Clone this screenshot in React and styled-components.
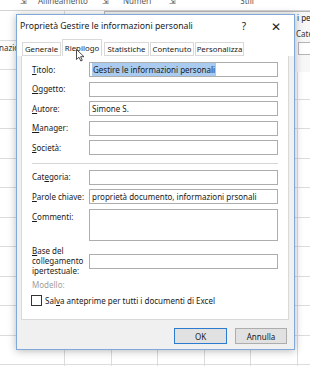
import {createGlobalStyle, styled} from 'styled-components'

const GlobalStyle = createGlobalStyle`
  html, body {
    margin: 0;
    padding: 0;
  }
  body {
    width: 310px;
    height: 366px;
    overflow: hidden;
    background: #fff;
    font-family: "Noto Sans", "Open Sans", sans-serif;
    color: #1a1a1a;
  }
`

const Sheet = styled.div`
  position: relative;
  width: 310px;
  height: 366px;
  overflow: hidden;
  background-color: #fff;
  background-image:
    repeating-linear-gradient(to bottom, transparent 0 28.5px, #dcdcdc 28.5px 29.5px),
    repeating-linear-gradient(to right, transparent 0 45.5px, #dcdcdc 45.5px 46.5px);
  background-position: 0 11px, 19px 0;
`

const Ribbon = styled.div`
  height: 10px;
  display: flex;
  align-items: flex-start;
  border-bottom: 1px solid #d4d4d4;
  background: #fff;
  font-size: 8px;
  line-height: 10px;
  color: #555;
  overflow: hidden;
`

const RibbonItem = styled.span`
  margin-left: ${p => p.$gap}px;
  margin-top: -4px;
  white-space: nowrap;
`

const BackWindow = styled.div`
  position: absolute;
  left: 104px;
  top: 11px;
  width: 240px;
  height: 60px;
  border-top: 1px solid #b8b8b8;
  border-left: 1px solid #b8b8b8;
  background: #f7f7f7;
  font-size: 8px;
  line-height: 11px;
`

const BackTitle = styled.div`
  padding-left: 192px;
  white-space: nowrap;
  color: #222;
`

const BackField = styled.div`
  display: flex;
  flex-direction: column;
  align-items: flex-start;
  margin: 5px 0 0 191px;
  color: #333;
`

const BackInput = styled.div`
  width: 40px;
  height: 11px;
  margin: 3px 0 0 2px;
  border: 1px solid #b5b5b5;
  background: #fff;
`

const CellText = styled.div`
  position: absolute;
  left: -1px;
  top: 42px;
  font-size: 8px;
  color: #333;
`

const Dialog = styled.div`
  position: absolute;
  left: 16px;
  top: 14px;
  width: 279px;
  height: 336px;
  box-sizing: border-box;
  border: 1px solid #7fa9d6;
  background: #f0f0f0;
  box-shadow: 0 1px 8px rgba(0, 0, 0, 0.28);
  display: flex;
  flex-direction: column;
  font-size: 8px;
`

const TitleBar = styled.div`
  height: 22px;
  flex: none;
  display: flex;
  align-items: center;
  background: #fff;
  padding-right: 2px;
`

const Title = styled.div`
  flex: 1;
  padding-left: 3px;
  white-space: nowrap;
  font-size: 8.7px;
  color: #1a1a1a;
`

const TitleButton = styled.div`
  width: 32px;
  height: 22px;
  display: flex;
  align-items: center;
  justify-content: center;
  font-size: ${p => p.$size}px;
  color: #222;
`

const TabRow = styled.div`
  display: flex;
  align-items: flex-end;
  height: 19px;
  padding: 3px 0 0 5px;
  box-sizing: border-box;
  background: #fff;
  position: relative;
  z-index: 1;
  margin-bottom: -1px;
`

const Tab = styled.div`
  width: ${p => p.$w}px;
  height: ${p => (p.$active ? 17 : 14)}px;
  box-sizing: border-box;
  margin-right: ${p => (p.$active ? 2 : 1)}px;
  display: flex;
  align-items: center;
  justify-content: center;
  border: 1px solid #d9d9d9;
  border-bottom: ${p => (p.$active ? 'none' : '1px solid #d9d9d9')};
  background: #fff;
  color: #1a1a1a;
  font-size: 7.8px;
  white-space: nowrap;
  position: relative;
`

const Cursor = styled.svg`
  position: absolute;
  left: 13px;
  top: 9px;
`

const Panel = styled.div`
  height: 265px;
  flex: none;
  box-sizing: border-box;
  margin: 0 5px 0 4px;
  padding: 6px 10px 0 10px;
  border: 1px solid #d9d9d9;
  background: #fff;
  display: flex;
  flex-direction: column;
`

const Group = styled.div`
  display: flex;
  flex-direction: column;
  gap: 4.5px;
  margin-top: ${p => p.$mt || 0}px;
`

const Row = styled.div`
  display: flex;
  align-items: ${p => (p.$top ? 'flex-start' : 'center')};
  margin-top: ${p => p.$mt || 0}px;
`

const Label = styled.div`
  width: 57px;
  flex: none;
  line-height: 10px;
  padding-top: ${p => (p.$top ? 3 : 0)}px;
  color: ${p => (p.$muted ? '#a0a0a0' : '#1a1a1a')};
  white-space: nowrap;
`

const Input = styled.div`
  width: 189px;
  height: ${p => p.$h || 15}px;
  box-sizing: border-box;
  border: 1px solid #adadad;
  background: #fff;
  padding: 0 2px;
  display: flex;
  align-items: ${p => (p.$h ? 'flex-start' : 'center')};
  white-space: nowrap;
  overflow: hidden;
`

const Selected = styled.span`
  background: #a8cbef;
  padding: 1px 1px;
`

const Separator = styled.div`
  width: 246px;
  height: 1px;
  margin-top: 7.5px;
  background: #d6d6d6;
`

const CheckRow = styled.label`
  display: flex;
  align-items: center;
  gap: 3px;
  margin-top: 5px;
  margin-left: -1px;
`

const Box = styled.span`
  width: 11px;
  height: 11px;
  box-sizing: border-box;
  border: 1px solid #333;
  background: #fff;
`

const Footer = styled.div`
  display: flex;
  justify-content: flex-end;
  gap: 8px;
  padding: 8px 7px 0 0;
`

const Button = styled.div`
  width: ${p => p.$w}px;
  height: 16px;
  box-sizing: border-box;
  display: flex;
  align-items: center;
  justify-content: center;
  background: #e1e1e1;
  border: 1px solid ${p => (p.$primary ? '#2b7bd0' : '#adadad')};
  color: #1a1a1a;
`

function Field({label, children, h, top}) {
  return (
    <Row $top={top}>
      <Label $top={top}>{label}</Label>
      <Input $h={h}>{children}</Input>
    </Row>
  )
}

export default function App() {
  return (
    <>
      <GlobalStyle />
      <Sheet>
        <Ribbon>
          <RibbonItem $gap={20}>⇲</RibbonItem>
          <RibbonItem $gap={11}>Allineamento</RibbonItem>
          <RibbonItem $gap={14}>⇲</RibbonItem>
          <RibbonItem $gap={14}>Numeri</RibbonItem>
          <RibbonItem $gap={18}>⇲</RibbonItem>
          <RibbonItem $gap={64}>Stili</RibbonItem>
        </Ribbon>
        <CellText>nazio</CellText>
        <BackWindow>
          <BackTitle>i personali</BackTitle>
          <BackField>
            <span>Categoria:</span>
            <BackInput />
          </BackField>
        </BackWindow>

        <Dialog>
          <TitleBar>
            <Title>Proprietà Gestire le informazioni personali</Title>
            <TitleButton $size={10}>?</TitleButton>
            <TitleButton $size={12}>✕</TitleButton>
          </TitleBar>
          <TabRow>
            <Tab $w={39}>Generale</Tab>
            <Tab $w={40} $active>
              Riepilogo
              <Cursor width="9" height="13" viewBox="0 0 9 13">
                <path d="M0.5 0.5 L0.5 10.5 L3 8.2 L4.8 12 L6.3 11.3 L4.6 7.7 L8 7.7 Z" fill="#fff" stroke="#222" strokeWidth="0.8" />
              </Cursor>
            </Tab>
            <Tab $w={45}>Statistiche</Tab>
            <Tab $w={44}>Contenuto</Tab>
            <Tab $w={49}>Personalizza</Tab>
          </TabRow>
          <Panel>
            <Group>
              <Field label={<><u>T</u>itolo:</>}>
                <Selected>Gestire le informazioni personali</Selected>
              </Field>
              <Field label={<><u>O</u>ggetto:</>} />
              <Field label={<><u>A</u>utore:</>}>Simone S.</Field>
              <Field label={<><u>M</u>anager:</>} />
              <Field label={<><u>S</u>ocietà:</>} />
            </Group>
            <Separator />
            <Group $mt={6}>
              <Field label={<>Cat<u>e</u>goria:</>} />
              <Field label={<><u>P</u>arole chiave:</>}>proprietà documento, informazioni prsonali</Field>
              <Field label={<><u>C</u>ommenti:</>} h={32} top />
            </Group>
            <Row $mt={5.5}>
              <Label>
                <u>B</u>ase del
                <br />
                collegamento
                <br />
                ipertestuale:
              </Label>
              <Input />
            </Row>
            <Row $mt={4}>
              <Label $muted>Modello:</Label>
            </Row>
            <CheckRow>
              <Box />
              <span>
                Sal<u>v</u>a anteprime per tutti i documenti di Excel
              </span>
            </CheckRow>
          </Panel>
          <Footer>
            <Button $w={53} $primary>OK</Button>
            <Button $w={52}>Annulla</Button>
          </Footer>
        </Dialog>
      </Sheet>
    </>
  )
}
